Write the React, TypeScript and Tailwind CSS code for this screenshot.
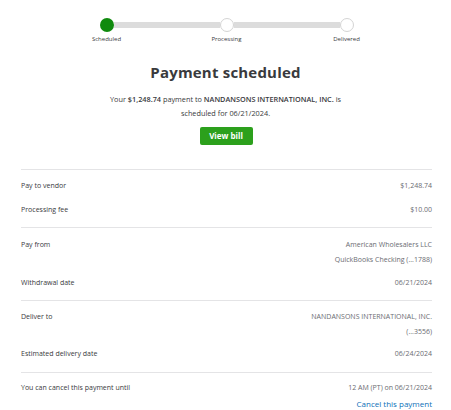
import React from "react";

const Row = ({ label, values, link }: { label: string; values: string[]; link?: string }) => (
  <div className="flex justify-between items-start">
    <div className="text-[7px] leading-[15px] text-[#393a3d]">{label}</div>
    <div className="flex flex-col items-end">
      {values.map((v) => (
        <div key={v} className="text-[7px] leading-[15px] text-[#6b6c72]">{v}</div>
      ))}
      {link && <div className="text-[8px] leading-[18px] text-[#0d6fb8]">{link}</div>}
    </div>
  </div>
);

export default function App() {
  return (
    <div className="w-[451px] h-[410px] bg-white overflow-hidden" style={{ fontFamily: '"Open Sans", "Liberation Sans", sans-serif' }}>
      <div className="flex flex-col items-center pt-[18px]">
        <div className="w-[254px] ml-[2px]">
          <div className="flex items-center">
            <div className="w-[14px] h-[14px] rounded-full bg-[#108a0e] shrink-0" />
            <div className="flex-1 h-[6px] bg-[#dcdcdc]" />
            <div className="w-[14px] h-[14px] rounded-full bg-white border border-[#d4d4d4] shrink-0" />
            <div className="flex-1 h-[6px] bg-[#dcdcdc]" />
            <div className="w-[14px] h-[14px] rounded-full bg-white border border-[#d4d4d4] shrink-0" />
          </div>
          <div className="flex justify-between -mx-[23px] mt-[2px]">
            <div className="w-[60px] text-center text-[6px] leading-[10px] text-[#393a3d]">Scheduled</div>
            <div className="w-[60px] text-center text-[6px] leading-[10px] text-[#393a3d]">Processing</div>
            <div className="w-[60px] text-center text-[6px] leading-[10px] text-[#393a3d]">Delivered</div>
          </div>
        </div>
        <div className="mt-[18px] text-[15px] leading-[21px] font-bold text-[#393a3d] tracking-[0.2px]">Payment scheduled</div>
        <div className="mt-[9px] text-center text-[7.3px] leading-[14px] text-[#393a3d]">
          <div>
            Your <span className="font-semibold">$1,248.74</span> payment to{" "}
            <span className="font-semibold">NANDANSONS INTERNATIONAL, INC.</span> is
          </div>
          <div>scheduled for 06/21/2024.</div>
        </div>
        <div className="mt-[7px] ml-[1px] w-[53px] h-[18px] rounded-[2px] bg-[#2ca01c] flex items-center justify-center text-white text-[8px] font-bold">
          View bill
        </div>
      </div>
      <div className="ml-[21px] mr-[19px] mt-[24px]">
        <div className="border-t border-[#e4e4e6] pt-[8px] pb-[10px] flex flex-col gap-[9px]">
          <Row label="Pay to vendor" values={["$1,248.74"]} />
          <Row label="Processing fee" values={["$10.00"]} />
        </div>
        <div className="border-t border-[#e4e4e6] pt-[9px] pb-[10px] flex flex-col gap-[8px]">
          <Row label="Pay from" values={["American Wholesalers LLC", "QuickBooks Checking (...1788)"]} />
          <Row label="Withdrawal date" values={["06/21/2024"]} />
        </div>
        <div className="border-t border-[#e4e4e6] pt-[8px] pb-[11px] flex flex-col gap-[7px]">
          <Row label="Deliver to" values={["NANDANSONS INTERNATIONAL, INC.", "(...3556)"]} />
          <Row label="Estimated delivery date" values={["06/24/2024"]} />
        </div>
        <div className="border-t border-[#e4e4e6] pt-[7px]">
          <Row label="You can cancel this payment until" values={["12 AM (PT) on 06/21/2024"]} link="Cancel this payment" />
        </div>
      </div>
    </div>
  );
}
